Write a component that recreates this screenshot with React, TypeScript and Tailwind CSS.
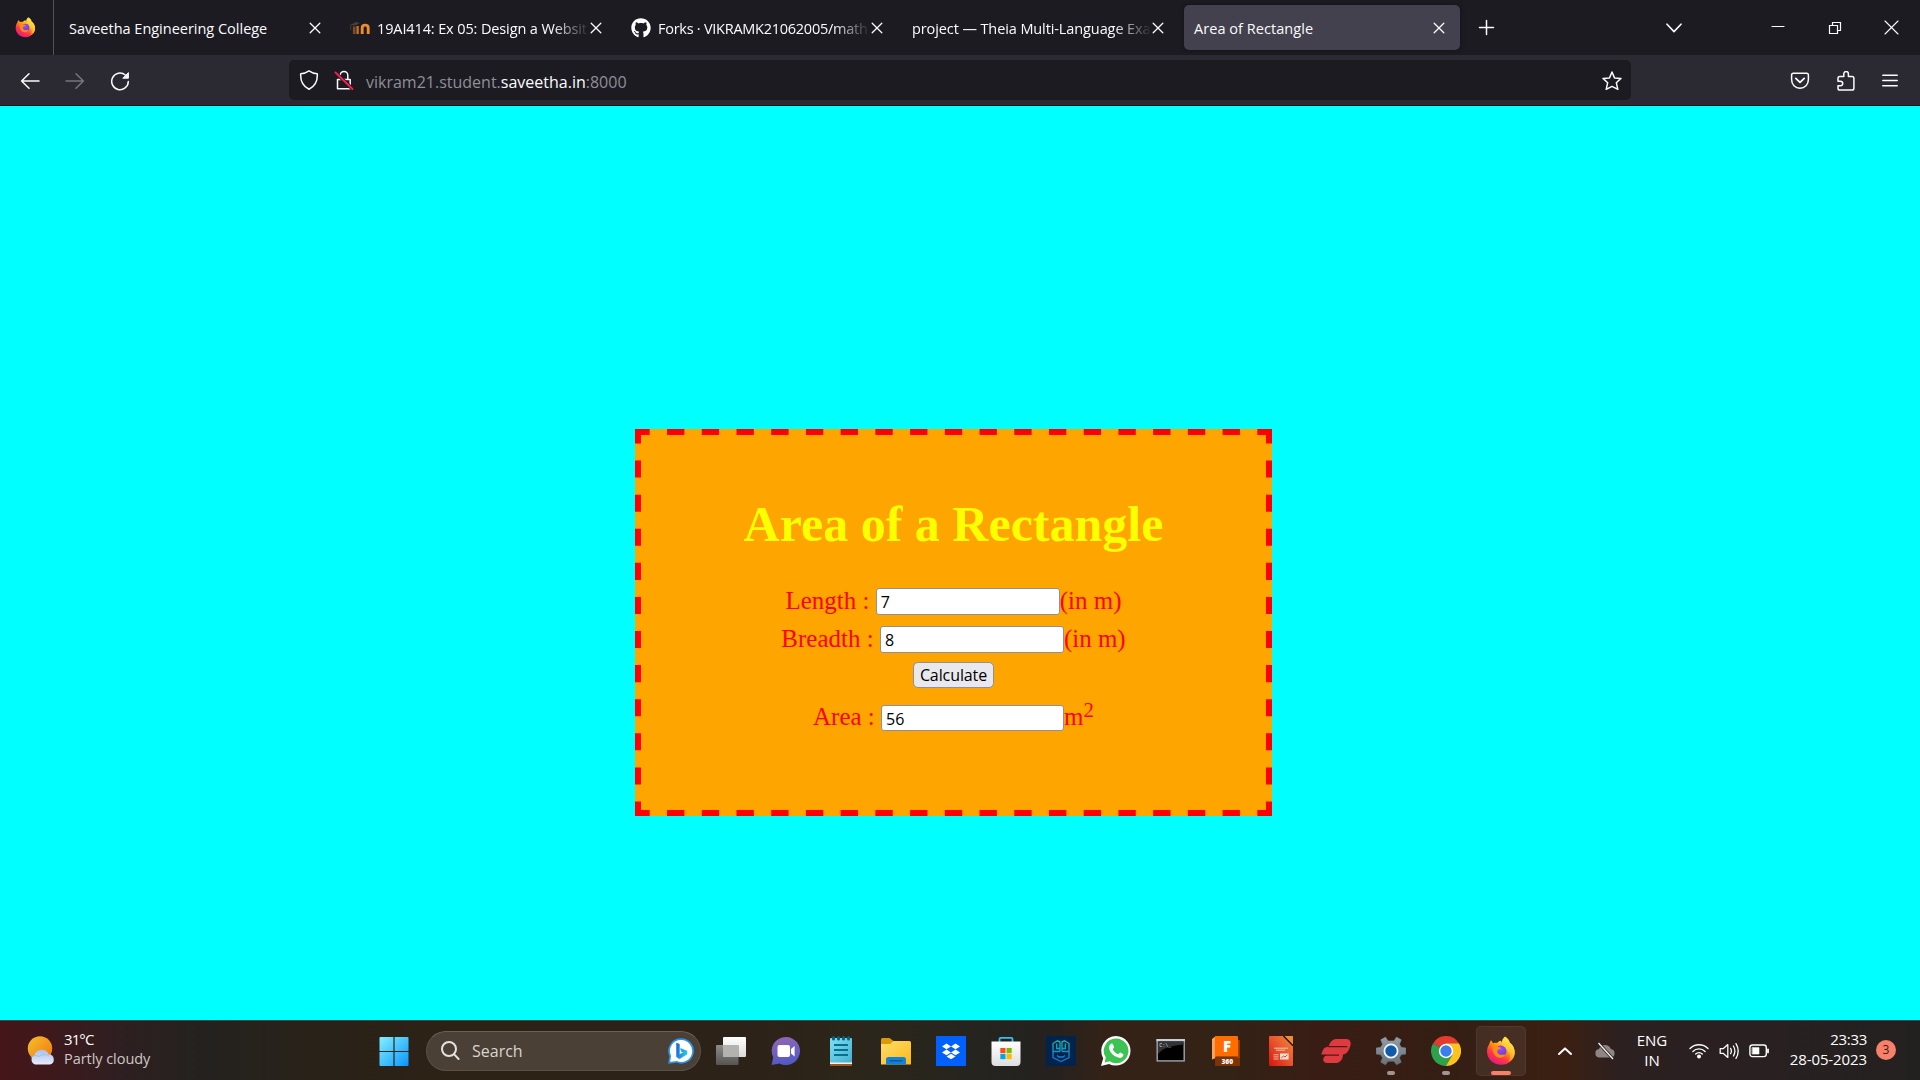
import React from "react";
import { FaGithub } from "react-icons/fa";

type KidsProps = { children?: React.ReactNode };

function Glyph({ children, size = 20, color = "#fbfbfe", w = 1.5 }: KidsProps & { size?: number; color?: string; w?: number }) {
  return (
    <svg width={size} height={size} viewBox={`0 0 ${size} ${size}`} fill="none" stroke={color} strokeWidth={w} strokeLinecap="round" strokeLinejoin="round" className="shrink-0">
      {children}
    </svg>
  );
}

function Firefox({ size, id }: { size: number; id: string }) {
  return (
    <svg width={size} height={size} viewBox="0 0 30 30" className="shrink-0">
      <defs>
        <linearGradient id={id + "a"} x1="0.85" y1="0.1" x2="0.25" y2="1">
          <stop offset="0" stopColor="#fff44f" />
          <stop offset="0.35" stopColor="#ff980e" />
          <stop offset="0.65" stopColor="#ff3647" />
          <stop offset="1" stopColor="#e31587" />
        </linearGradient>
        <linearGradient id={id + "b"} x1="0.7" y1="0" x2="0.4" y2="1">
          <stop offset="0" stopColor="#fff44f" />
          <stop offset="0.6" stopColor="#ffbd2e" />
          <stop offset="1" stopColor="#ff7a1a" />
        </linearGradient>
        <radialGradient id={id + "c"} cx="0.5" cy="0.3" r="0.7">
          <stop offset="0" stopColor="#a04bff" />
          <stop offset="1" stopColor="#5b3fd0" />
        </radialGradient>
      </defs>
      <path d="M5.2 4.3C5.8 6 6.6 6.8 7.6 7.3C8.8 6.8 10 6.7 11.2 7C12.4 5.5 13.5 5 15 4.8L16.5 8L22 6C26 8 28.6 11.5 28.7 16.2C28.7 23.5 22.6 28.8 15 28.8C7.2 28.8 1 23.3 1 15.6C1 12.3 2 9.6 3.4 8C3.6 6.5 4.2 5.2 5.2 4.3Z" fill={`url(#${id}a)`} />
      <path d="M19 0.4C22.2 2.2 23.4 4.3 23.8 6.4C26.8 8.6 28.8 12.4 28.7 16.6C28.6 21.2 25.8 24.7 22.6 26C24.6 22.8 24.4 18.6 22.2 15.6C20 12.6 17 11 16 7.6C15.5 4.6 16.8 2 19 0.4Z" fill={`url(#${id}b)`} />
      <circle cx="14.8" cy="15.2" r="5.6" fill={`url(#${id}c)`} />
      <path d="M6.5 9.5C8.2 9 10 9.3 11.4 10.4C12.8 11.2 14.2 11.2 15.2 11.5C14.8 13.2 12.6 13.2 11.6 14.3C10.8 16.6 12.4 18.6 14.8 18.8C16.4 18.8 17.8 18 19.4 18.6C17.8 21.4 15.2 22.4 12.4 21.6C8.4 20.6 6 16 6.5 9.5Z" fill="#ff8a16" />
    </svg>
  );
}

function CloseMark() {
  return (
    <Glyph size={12} w={1.3}>
      <path d="M1.2 1.2L10.8 10.8M10.8 1.2L1.2 10.8" />
    </Glyph>
  );
}

function Tab({ title, icon, active = false, fade = false, track }: { title: string; icon?: React.ReactNode; active?: boolean; fade?: boolean; track: string }) {
  return (
    <div className={"flex h-[45px] w-[276px] shrink-0 items-center rounded-[5px] pl-[9px] pr-[15px] " + (active ? "bg-[#42414d] shadow-[0_0_4px_rgba(0,0,0,0.4)]" : "")}>
      {icon && <div className="mr-[7px] flex h-5 w-5 shrink-0 items-center justify-center">{icon}</div>}
      <div className={"min-w-0 flex-1 overflow-hidden whitespace-nowrap pt-[2px] text-[14.5px] leading-5 text-[#fbfbfe] " + track + (fade ? " [mask-image:linear-gradient(to_right,black_calc(100%-38px),transparent)]" : "")}>{title}</div>
      <CloseMark />
    </div>
  );
}

function TabStrip() {
  return (
    <div className="flex h-[55px] items-center bg-[#1c1b22]">
      <div className="flex h-full w-[54px] items-center border-r border-[#53525b] pl-[15px]">
        <Firefox size={21} id="ft" />
      </div>
      <div className="ml-[6px] flex gap-[5px]">
        <Tab title="Saveetha Engineering College" track="tracking-[-0.01px]" />
        <Tab
          title="19AI414: Ex 05: Design a Websit"
          track="tracking-[-0.12px]"
          fade
          icon={
            <svg width="20" height="20" viewBox="0 0 20 20" fill="none">
              <path d="M0 7L6 4L10 5L5 7.5Z" fill="#45403f" />
              <path d="M0.8 7V12" stroke="#4a3a30" />
              <path d="M4.2 16V8.5" stroke="#7d4e2a" strokeWidth="2.6" />
              <path d="M12.2 16V9.8C12.2 6.2 18.2 6.2 18.2 9.8V16" stroke="#ef8c2d" strokeWidth="2.9" />
              <path d="M7.6 8V16" stroke="#c46f26" strokeWidth="2.4" />
            </svg>
          }
        />
        <Tab title="Forks · VIKRAMK21062005/math" track="tracking-[-0.26px]" fade icon={<FaGithub size={20} color="#fff" />} />
        <Tab title="project — Theia Multi-Language Exa" track="tracking-[-0.1px]" fade />
        <Tab title={"Area of Rectangle"} track="pl-[1px] tracking-[0.05px]" active />
      </div>
      <div className="ml-[18px] flex w-4 justify-center">
        <Glyph size={17} w={1.5}><path d="M8.5 1.5V15.5M1.5 8.5H15.5" /></Glyph>
      </div>
      <div className="ml-auto flex items-center pr-[21px]">
        <Glyph size={16} w={1.6}><path d="M1 4.2L8 11.6L15 4.2" /></Glyph>
        <div className="ml-[89px]"><Glyph size={14} w={1.2}><path d="M1 5.5H13" /></Glyph></div>
        <div className="ml-[43px]">
          <Glyph size={14} w={1.2}><path d="M1.5 4.5H9.5V12.5H1.5ZM4.5 4.2V1.5H12.5V9.5H9.8" strokeLinejoin="miter" /></Glyph>
        </div>
        <div className="ml-[42px]"><Glyph size={15} w={1.1}><path d="M1 1L14 14M14 1L1 14" /></Glyph></div>
      </div>
    </div>
  );
}

function Toolbar() {
  return (
    <div className="flex h-[51px] items-center border-b border-[#0c0c0f] bg-[#2b2a33]">
      <div className="flex w-[289px] items-center pl-5 pt-[2px]">
        <Glyph><path d="M19 10H1.6M9 2.7L1.6 10L9 17.3" /></Glyph>
        <div className="ml-[25px]"><Glyph color="#77767e"><path d="M1 10H18.4M11 2.7L18.4 10L11 17.3" /></Glyph></div>
        <div className="ml-[25px]">
          <Glyph>
            <path d="M15.3 4A8.3 8.3 0 1 0 18.3 10.5" />
            <path d="M18.4 2V7.2H13.2Z" fill="#fbfbfe" strokeWidth="1" />
          </Glyph>
        </div>
      </div>
      <div className="flex h-10 w-[1342px] items-center rounded-[5px] bg-[#1c1b22] pl-[10px] pr-[9px]">
        <Glyph><path d="M10 0.9C12 2.3 14.8 3.6 18.3 3.8C18.7 10.7 16.2 16.2 10 19.2C3.8 16.2 1.3 10.7 1.7 3.8C5.2 3.6 8 2.3 10 0.9Z" /></Glyph>
        <div className="ml-[15px]">
          <Glyph>
            <path d="M3.5 9.5H16.2V18.8H3.5ZM6.2 9.3V5.2A3.8 3.8 0 0 1 13.8 5.2V9.3" />
            <path d="M1.5 2.5L18.5 19" stroke="#1c1b22" strokeWidth="3.6" />
            <path d="M1.5 2.5L18.5 19" stroke="#ff1f4f" strokeWidth="1.8" />
          </Glyph>
        </div>
        <div className="ml-[12px] flex pt-[3px] text-[16px] leading-5 text-[#8f8f98]">
          <span>vikram21.student.</span>
          <span className="text-[#fbfbfe]">saveetha.in</span>
          <span>:8000</span>
        </div>
        <div className="ml-auto pt-[1px]">
          <Glyph><path d="M10 1L12.5 6.9L19 7.4L14.3 11.7L15.8 18.3L10 15.4L4.2 18.3L5.7 11.7L1 7.4L7.5 6.9Z" /></Glyph>
        </div>
      </div>
      <div className="ml-auto flex items-center pr-5 pt-[1px]">
        <Glyph>
          <path d="M3.4 2.2H16.6Q18.4 2.2 18.4 4V8.6C18.4 13.6 14.8 17.2 10 17.2C5.2 17.2 1.6 13.6 1.6 8.6V4Q1.6 2.2 3.4 2.2Z" />
          <path d="M5.8 7.4L10 11.4L14.2 7.4" strokeWidth="1.8" />
        </Glyph>
        <div className="ml-[26px]">
          <Glyph><path d="M7.8 5.4V2.8A2.3 2.3 0 0 1 12.4 2.8V5.4H16Q17.9 5.4 17.9 7.3V17.2Q17.9 19 16 19H3.8Q2 19 2 17.2V14.8H4.4A2.3 2.3 0 0 0 4.4 10.2H2V7.3Q2 5.4 3.8 5.4Z" /></Glyph>
        </div>
        <div className="ml-[24px]"><Glyph><path d="M2.8 4.2H17.2M2.8 9.5H17.2M2.8 14.8H17.2" /></Glyph></div>
      </div>
    </div>
  );
}

function DashedFrame() {
  return (
    <svg className="absolute inset-0" width="637" height="387" stroke="#f00" strokeWidth="6">
      <path d="M6 3H631M6 384H631" strokeDasharray="17.361" strokeDashoffset="8.68" />
      <path d="M3 6V381M634 6V381" strokeDasharray="17.045" strokeDashoffset="8.52" />
      <path d="M0 3H6M631 3H637M0 384H6M631 384H637" />
    </svg>
  );
}

function Field({ label, value, unit, box, row }: { label: string; value: string; unit: React.ReactNode; box: string; row: string }) {
  return (
    <div className={"flex items-center whitespace-pre " + row}>
      <span className="-mt-[2px]">{label + " : "}</span>
      <input defaultValue={value} className={"rounded-[3px] border border-[#8f8f9d] bg-white pl-[4px] pt-[1px] font-['Open_Sans',sans-serif] text-[16px] text-black outline-none " + box} />
      <span className="-mt-[2px] flex">{unit}</span>
    </div>
  );
}

function Calculator() {
  return (
    <main className="flex h-[914px] justify-center bg-[#0ff] pr-[13px] pt-[323px]">
      <section className="relative flex h-[387px] w-[637px] flex-col items-center bg-[#ffa500] pt-[67px] font-['Liberation_Serif',serif] text-[25px] leading-7 text-[#f00]">
        <DashedFrame />
        <h1 className="text-[50px] font-bold leading-[56px] text-[#ff0]">Area of a Rectangle</h1>
        <Field label="Length" value="7" unit="(in m)" box="h-[27px] w-[184px]" row="mt-[36px] h-[27px]" />
        <Field label="Breadth" value="8" unit="(in m)" box="h-[27px] w-[184px]" row="mt-[11px] h-[27px]" />
        <button className="mt-[9px] h-[26px] w-[81px] rounded-[5px] border border-[#8f8f9d] bg-[#e9e9ed] font-['Open_Sans',sans-serif] text-[16px] leading-[23px] tracking-[-0.1px] text-black">Calculate</button>
        <Field
          label="Area"
          value="56"
          unit={
            <>
              <span>m</span>
              <span className="-mt-[7px] text-[20.8px]">2</span>
            </>
          }
          box="h-[26px] w-[183px]"
          row="mt-[17px] h-[26px]"
        />
      </section>
    </main>
  );
}

function AppIcon({ children, run }: KidsProps & { run?: boolean }) {
  return (
    <div className="relative flex h-[60px] w-[55px] shrink-0 items-center justify-center">
      <svg width="30" height="30" viewBox="0 0 30 30">{children}</svg>
      {run && <div className="absolute bottom-[6px] left-[23.5px] h-1 w-2 rounded-full bg-[#a09590]" />}
    </div>
  );
}

function Apps() {
  return (
    <>
      <AppIcon>
        <defs>
          <linearGradient id="tv" x1="0" y1="0" x2="0" y2="1"><stop stopColor="#8d8b89" /><stop offset="1" stopColor="#565452" /></linearGradient>
          <linearGradient id="tw" x1="0" y1="0" x2="0" y2="1"><stop stopColor="#fff" /><stop offset="1" stopColor="#dcdad8" /></linearGradient>
        </defs>
        <rect x="7" y="1" width="23" height="20" rx="1" fill="url(#tw)" />
        <rect x="0" y="9" width="22.5" height="20" rx="1" fill="url(#tv)" />
        <path d="M7 9H22.5V21H7Z" fill="#b4b2b0" />
      </AppIcon>
      <AppIcon>
        <defs><linearGradient id="ch" x1="0.3" y1="0" x2="0.5" y2="1"><stop stopColor="#9167b4" /><stop offset="1" stopColor="#5059c9" /></linearGradient></defs>
        <path d="M15 1A14 14 0 1 1 8.5 27.4L0.6 29L2.2 21.4A14 14 0 0 1 15 1Z" fill="url(#ch)" />
        <rect x="6.5" y="9" width="12.5" height="12" rx="2" fill="#fff" />
        <path d="M20 13L23.6 10V20.4L20 17.4Z" fill="#fff" />
      </AppIcon>
      <AppIcon>
        <defs><linearGradient id="np" x1="0" y1="0" x2="1" y2="1"><stop stopColor="#7ee0f4" /><stop offset="1" stopColor="#45b0cf" /></linearGradient></defs>
        <path d="M4 25H26V29Q26 30 25 30H5Q4 30 4 29Z" fill="#a5541a" />
        <path d="M4 24H26V28H4Z" fill="#f1f1f1" />
        <rect x="4" y="2" width="22" height="24.5" rx="1" fill="url(#np)" />
        <path d="M8 9H22M8 14H22M8 19H22" stroke="#07708f" strokeWidth="1.8" />
        <path d="M7.5 1.5V3M12.5 1.5V3M17.5 1.5V3M22.5 1.5V3" stroke="#0a6280" strokeWidth="3" strokeLinecap="round" />
      </AppIcon>
      <AppIcon>
        <defs><linearGradient id="fo" x1="0" y1="0" x2="1" y2="1"><stop stopColor="#ffdd6b" /><stop offset="1" stopColor="#fbb917" /></linearGradient></defs>
        <path d="M0 3.5Q0 2 1.5 2H8.5L12.5 5V10H0Z" fill="#dc9a05" />
        <path d="M0 8H9L12.5 5H28.5Q30 5 30 6.5V28.5H0Z" fill="url(#fo)" />
        <path d="M5 28.5V23.5Q5 21 7.5 21H22.5Q25 21 25 23.5V28.5Z" fill="#1282d8" />
        <path d="M8.5 24.8H21.5" stroke="#0b559c" strokeWidth="1.3" />
      </AppIcon>
      <AppIcon>
        <rect width="30" height="30" fill="#0061fe" />
        <path d="M10.5 7.5L15 10.4L10.5 13.3L6 10.4ZM19.5 7.5L24 10.4L19.5 13.3L15 10.4ZM10.5 13.5L15 16.4L10.5 19.3L6 16.4ZM19.5 13.5L24 16.4L19.5 19.3L15 16.4ZM15 17.7L19.5 20.4L15 23.3L10.5 20.4Z" fill="#fff" />
      </AppIcon>
      <AppIcon>
        <defs><linearGradient id="st" x1="0" y1="0" x2="0" y2="1"><stop stopColor="#fff" /><stop offset="1" stopColor="#dedede" /></linearGradient></defs>
        <path d="M8.5 6.5V3Q8.5 1.8 9.7 1.8H20.3Q21.5 1.8 21.5 3V6.5" fill="none" stroke="#35c0f0" strokeWidth="1.8" />
        <path d="M0.5 5.5H29.5V26Q29.5 30 25.5 30H4.5Q0.5 30 0.5 26Z" fill="url(#st)" />
        <path d="M9.3 12H14.5V17.2H9.3Z" fill="#f25022" />
        <path d="M15.5 12H20.7V17.2H15.5Z" fill="#7fba00" />
        <path d="M9.3 18H14.5V23.2H9.3Z" fill="#00a4ef" />
        <path d="M15.5 18H20.7V23.2H15.5Z" fill="#ffb900" />
      </AppIcon>
      <AppIcon>
        <defs><linearGradient id="hx" gradientUnits="userSpaceOnUse" x1="0" y1="4" x2="0" y2="26"><stop stopColor="#15bfae" /><stop offset="1" stopColor="#1270d8" /></linearGradient></defs>
        <rect width="30" height="30" fill="#02234b" />
        <path d="M14 15.5V6L11.5 4.8L7 7.5V15.5H14M16 15.5V6L18.5 4.8L23 7.5V15.5H16M10.7 7.5V12.5H14M19.3 7.5V12.5H16M7 15.5V21.5L15 25.5L23 21.5V15.5M11 19.5L13 21H17L19 19.5" fill="none" stroke="url(#hx)" strokeWidth="1.3" />
      </AppIcon>
      <AppIcon>
        <path d="M15 0A14.8 14.8 0 1 1 8 28L0 30L2.2 22.2A14.8 14.8 0 0 1 15 0Z" fill="#fff" />
        <path d="M15.2 2.6A12.3 12.3 0 1 1 8.6 25.3L3.6 26.5L4.8 21.6A12.3 12.3 0 0 1 15.2 2.6Z" fill="#3dc254" />
        <path d="M10.2 7.8C10.8 7.4 11.6 7.6 11.9 8.3L13 10.8C13.3 11.6 12 12.7 11.7 13.2C13 15.7 14.6 17.2 17.2 18.3C17.8 17.8 18.6 16.3 19.3 16.6L22 17.9C22.5 18.2 22.5 18.6 22.3 19.4C21.6 21.5 19.3 22.3 17.2 21.6C12.6 20.3 9.8 17.2 8.3 13.5C7.5 11.2 8.5 8.8 10.2 7.8Z" fill="#fff" />
      </AppIcon>
      <AppIcon>
        <rect x="1.2" y="3.7" width="27" height="21.2" fill="#000" stroke="#9fa6ad" strokeWidth="1.4" />
        <path d="M0.5 3H28.9V5.4H0.5Z" fill="#c6ced8" />
        <path d="M2 5.6H27.5V8.5C20 9 10 11 5 15L2 18Z" fill="#333" />
        <text x="3.2" y="11.4" fontSize="5" fontFamily="Liberation Mono" fill="#ddd">C:\_</text>
      </AppIcon>
      <AppIcon>
        <path d="M1 3L5 0V22L1 23.5Z" fill="#ffa35c" />
        <path d="M4 20.5H29V30H4Z" fill="#7c3405" />
        <path d="M26 4H28.8V22H26Z" fill="#a34405" />
        <rect x="4" y="0" width="23" height="20.5" rx="1" fill="#ff6d00" />
        <text x="16" y="16" textAnchor="middle" fontSize="15" fontWeight="800" fontFamily="Open Sans" fill="#fff">F</text>
        <text x="16.3" y="27.6" textAnchor="middle" fontSize="6.6" fontWeight="800" fontFamily="Open Sans" fill="#fff">360</text>
      </AppIcon>
      <AppIcon>
        <defs><linearGradient id="im" x1="1" y1="0" x2="0" y2="1"><stop stopColor="#f28a3c" /><stop offset="0.5" stopColor="#e8532c" /><stop offset="1" stopColor="#d4150f" /></linearGradient></defs>
        <path d="M3 1Q3 0 4 0H17L27 9.5V29Q27 30 26 30H4Q3 30 3 29Z" fill="url(#im)" />
        <path d="M18 0H27V9Z" fill="#f08a35" />
        <path d="M17.5 0L27 9.8" stroke="#33190f" strokeWidth="1.5" />
        <path d="M8 12.2H22M10 14.2H19" stroke="#ffd9cd" strokeWidth="1" opacity="0.85" />
        <path d="M7.5 18.8H12.5M7.5 20.9H12.5M7.5 23H12.5" stroke="#fbc9bb" strokeWidth="1" opacity="0.85" />
        <rect x="14" y="17.5" width="8.6" height="6" fill="#fbe3db" />
        <path d="M15.2 22L17.5 20L19 21L21.5 18.7" fill="none" stroke="#de3a20" />
      </AppIcon>
      <AppIcon>
        <path d="M7.6 10.5C9 5.5 12 3 16 3H25C29.5 3 31 7 28.6 12C27 16 25 18.3 21.9 18.6C22 23.5 19 27 15.5 27H6C2 27 1 23 3.8 20.2L5.5 18.5H0.2L2.2 13.5Q3 11.6 5 11.2Z" fill="#de3b40" />
        <path d="M7.4 10.7H25.8M4.6 19.2H17.5" stroke="#4c1d18" strokeWidth="1.2" strokeLinecap="round" />
      </AppIcon>
      <AppIcon run>
        <defs><linearGradient id="se" x1="0" y1="0" x2="0" y2="1"><stop stopColor="#939da6" /><stop offset="1" stopColor="#68727c" /></linearGradient></defs>
        <path d="M12 5L9.5 1.2L4.8 3.8L6.6 8.3L4.6 11.4L0.2 12V18L4.6 18.6L6.6 21.7L4.8 26.2L9.5 28.8L12 25.2H18L20.5 28.8L25.2 26.2L23.4 21.7L25.4 18.6L29.8 18V12L25.4 11.4L23.4 8.3L25.2 3.8L20.5 1.2L18 5Z" fill="url(#se)" stroke="url(#se)" strokeLinejoin="round" strokeWidth="0.6" />
        <circle cx="15" cy="15" r="6.6" fill="#0f5cab" stroke="#f4f6f8" strokeWidth="1.8" />
      </AppIcon>
      <AppIcon run>
        <path d="M15 15L2 7.5A15 15 0 0 1 28 7.5Z" fill="#e33b2e" />
        <path d="M15 15L2 7.5A15 15 0 0 0 14.8 30L21.5 18.7Z" fill="#2da14c" />
        <path d="M15 15L15 7.5H28A15 15 0 0 1 14.8 30L21.5 18.7Z" fill="#fcc31e" />
        <circle cx="15" cy="15" r="7.2" fill="#fff" />
        <circle cx="15" cy="15" r="5.7" fill="#3b7ded" />
      </AppIcon>
      <div className="flex h-[60px] w-[55px] shrink-0 items-center justify-center">
        <div className="relative flex h-[50px] w-[50px] items-center justify-center rounded-[5px] border border-white/5 bg-white/[0.07]">
          <Firefox size={30} id="fb" />
          <div className="absolute bottom-0 left-[14px] h-1 w-5 rounded-full bg-[#f87f68]" />
        </div>
      </div>
    </>
  );
}

function Taskbar() {
  return (
    <footer className="flex h-[60px] items-center border-t border-[#4a4543] bg-[linear-gradient(90deg,#451619_0px,#40181b_40px,#2e1f21_120px,#24221f_200px,#292218_330px,#2d2216_450px,#2d2217_750px,#2b261b_880px,#25241f_980px,#24211f_1050px,#352216_1110px,#332216_1230px,#391d14_1320px,#341e14_1450px,#3b2012_1565px,#2c2020_1620px,#292021_1750px,#232120_1920px)] text-[15px] text-white">
      <div className="flex w-[366.5px] items-center pl-[27px]">
        <svg width="30" height="30" viewBox="0 0 30 30">
          <defs>
            <linearGradient id="su" x1="0" y1="0" x2="1" y2="1"><stop stopColor="#f5c02e" /><stop offset="1" stopColor="#f2760c" /></linearGradient>
            <linearGradient id="cl" x1="0" y1="0" x2="0" y2="1"><stop stopColor="#a9c0ee" /><stop offset="1" stopColor="#e6edfb" /></linearGradient>
          </defs>
          <circle cx="13" cy="12.5" r="12.2" fill="url(#su)" />
          <path d="M8 28.5A5 5 0 0 1 7.4 19.2A7.6 7.6 0 0 1 21.6 18.3A5.2 5.2 0 0 1 23 28.5Z" fill="url(#cl)" />
          <path d="M3.5 22Q7 18 12 20.5Q17 17 22 20" fill="none" stroke="#8fa9e6" strokeWidth="0.8" opacity="0.7" />
        </svg>
        <div className="ml-[7px] pb-[3px] leading-5">
          <div className="text-[15px] tracking-[-0.9px]">31°C</div>
          <div className="text-[14.5px] tracking-[-0.05px] text-[#cdc8c8]">Partly cloudy</div>
        </div>
      </div>
      <AppIcon>
        <defs><linearGradient id="wi" gradientUnits="userSpaceOnUse" x1="0" y1="0" x2="30" y2="30"><stop stopColor="#84f3ff" /><stop offset="1" stopColor="#0a93ff" /></linearGradient></defs>
        <path d="M0.5 2Q0.5 1 1.5 1H14.4V14.9H0.5ZM15.6 1H28.5Q29.5 1 29.5 2V14.9H15.6ZM0.5 16.1H14.4V30H1.5Q0.5 30 0.5 29ZM15.6 16.1H29.5V29Q29.5 30 28.5 30H15.6Z" fill="url(#wi)" />
      </AppIcon>
      <div className="ml-[4.5px] mr-[2.5px] flex h-10 w-[275px] shrink-0 items-center rounded-full border border-[#5a5046] border-t-[#6b6158] bg-[#4a4035] pl-[14px] pr-[6px]">
        <Glyph color="#e4e1de" w={2}><circle cx="8" cy="8" r="7" /><path d="M13.2 13.4L17.6 18" /></Glyph>
        <span className="ml-[11px] text-[16px] leading-5 text-[#d8d4d0]">Search</span>
        <svg width="26" height="26" viewBox="0 0 26 26" className="ml-auto">
          <defs><linearGradient id="bi" x1="0" y1="0" x2="1" y2="0.3"><stop stopColor="#1660e0" /><stop offset="1" stopColor="#25c4e0" /></linearGradient></defs>
          <path d="M13 1.2A11.8 11.8 0 1 1 8.5 23.8L1.2 24.8L2.2 18A11.8 11.8 0 0 1 13 1.2Z" fill="#fff" stroke="#2a92ec" strokeWidth="1.7" />
          <path d="M8.6 5L11.4 6.2V16.6L15.6 14.6L13.6 13.6L12.6 10.6L19 13V16.2L11.4 20.8L8.6 18.8Z" fill="url(#bi)" strokeLinejoin="round" stroke="url(#bi)" strokeWidth="0.6" />
        </svg>
      </div>
      <Apps />
      <div className="ml-auto flex items-center pr-[24px]">
        <Glyph size={16} w={2}><path d="M2 11L8 5.4L14 11" /></Glyph>
        <svg width="22" height="18" viewBox="0 0 22 18" className="ml-[21px]">
          <path d="M5 15.5A4.3 4.3 0 0 1 5 7A6.3 6.3 0 0 1 16.8 7A4.3 4.3 0 0 1 17 15.5Z" fill="#8d8685" />
          <path d="M4.5 1L19 17" stroke="#2c2020" strokeWidth="3" />
          <path d="M4.5 1L19 17" stroke="#f0eeee" strokeWidth="1.4" />
        </svg>
        <div className="-mt-[2px] ml-[19px] w-[34px] text-center leading-5">ENG<br />IN</div>
        <div className="ml-[20px]">
          <Glyph w={1.4}>
            <path d="M1 7.5A12.8 12.8 0 0 1 19 7.5M3.9 10.4A8.7 8.7 0 0 1 16.1 10.4M6.7 13.1A4.8 4.8 0 0 1 13.3 13.1" />
            <circle cx="10" cy="15.4" r="1.3" fill="#fff" />
          </Glyph>
        </div>
        <div className="ml-[9px]">
          <Glyph size={22} w={1.3}>
            <path d="M2.2 8.6H5.4L9.8 4.6V17.4L5.4 13.4H2.2ZM12.6 8.4Q14.2 11 12.6 13.6M15.4 6Q18.4 11 15.4 16M18 3.6Q22.4 11 18 18.4" />
          </Glyph>
        </div>
        <div className="ml-[9px]">
          <Glyph size={20} w={1.4}>
            <rect x="0.9" y="4" width="16.4" height="11.6" rx="2.6" />
            <path d="M3.4 6.6H10V13H3.4Z" fill="#fff" strokeWidth="0.6" />
            <path d="M19 8.4V11.4" strokeWidth="1.8" />
          </Glyph>
        </div>
        <div className="-mt-[3px] ml-[18px] w-[80px] text-right leading-5">
          <div className="tracking-[-0.3px]">23:33</div>
          <div className="tracking-[-0.1px]">28-05-2023</div>
        </div>
        <div className="-mt-px ml-[9px] flex h-5 w-5 items-center justify-center rounded-full bg-[#f87f68] text-[12px] text-[#3a1712]">3</div>
      </div>
    </footer>
  );
}

export default function App() {
  return (
    <div className="flex h-[1080px] w-[1920px] flex-col overflow-hidden font-['Open_Sans',sans-serif]">
      <TabStrip />
      <Toolbar />
      <Calculator />
      <Taskbar />
    </div>
  );
}
